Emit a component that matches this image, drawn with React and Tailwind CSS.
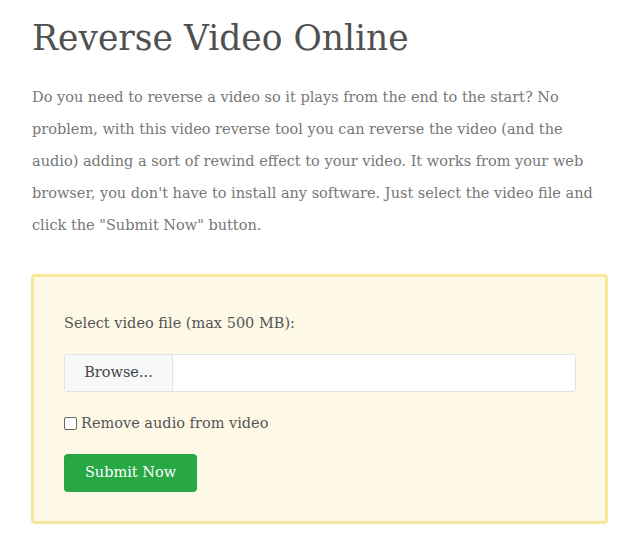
import React from 'react';

const serif = { fontFamily: '"DejaVu Serif", "Liberation Serif", serif' };

const intro = [
    'Do you need to reverse a video so it plays from the end to the start? No',
    'problem, with this video reverse tool you can reverse the video (and the',
    'audio) adding a sort of rewind effect to your video. It works from your web',
    "browser, you don't have to install any software. Just select the video file and",
    'click the "Submit Now" button.',
];

export default function App() {
    return (
        <div className="min-h-[542px] bg-white px-8 pt-[14px]" style={serif}>
            <h1 className="text-[34.5px] leading-[48px] text-[#505050]">Reverse Video Online</h1>

            {/* intro paragraph */}
            <p className="mt-[19px] text-[14.5px] leading-[32px] text-[#777]">
                {intro.map((line, i) => (
                    <span key={i} className="block whitespace-nowrap">{line}</span>
                ))}
            </p>

            {/* upload form */}
            <div className="mt-[33px] w-[577px] -ml-px rounded-[4px] border-[3px] border-[#f7e79c] bg-[#fef9e7] px-[30px] pt-[34px] pb-[29px]">
                <label className="block text-[14.5px] leading-[24px] text-[#555]">Select video file (max 500 MB):</label>

                <div className="mt-[19px] flex h-[38px] w-[512px] overflow-hidden rounded-[3px] border border-[#e3e3e3] bg-white">
                    <div className="flex w-[108px] items-center justify-center border-r border-[#e3e3e3] bg-[#f7f8fa] text-[14.5px] text-[#444]">
                        Browse...
                    </div>
                    <div className="flex-1" />
                </div>

                <label className="mt-[20px] flex items-center gap-[4px] text-[14.5px] leading-[22px] text-[#555]">
                    <span className="h-[13px] w-[13px] rounded-[2px] border border-[#666] bg-white" />
                    Remove audio from video
                </label>

                <button className="mt-[20px] flex h-[38px] w-[133px] items-center justify-center rounded-[4px] bg-[#28a745] text-[14.5px] text-white">
                    Submit Now
                </button>
            </div>
        </div>
    );
}
